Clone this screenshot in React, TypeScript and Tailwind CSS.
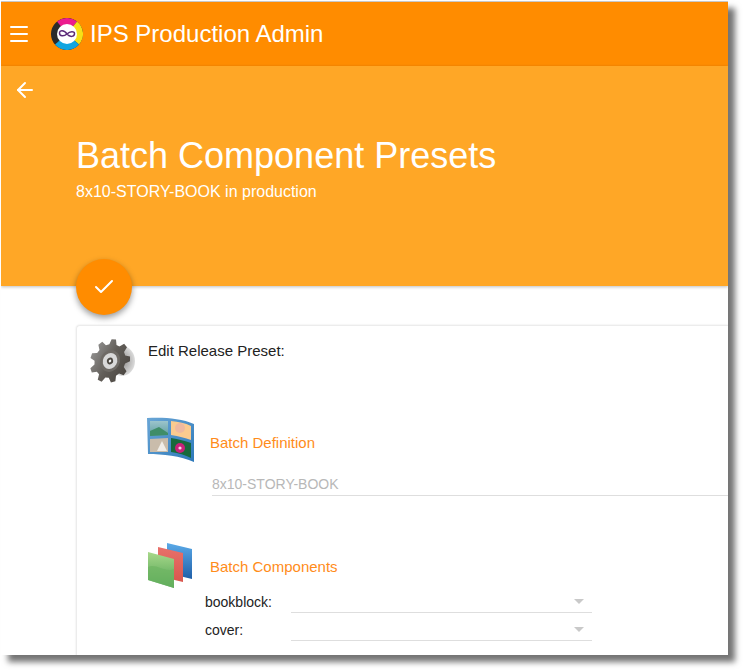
import { ArrowLeft, Check, Menu } from "lucide-react";

const font = { fontFamily: '"Liberation Sans", Arial, sans-serif' };

const LogoIcon = () => (
  <svg width="32" height="32" viewBox="0 0 32 32" className="shrink-0">
    <circle cx="16" cy="16" r="16" fill="#2b2b2b" />
    <path d="M6 3.5 A16 16 0 0 1 26 3.5 L16 16 Z" fill="#ec1c8e" />
    <path d="M26 3.5 A16 16 0 0 1 28 26.6 L16 16 Z" fill="#f7e017" />
    <path d="M28 26.6 A16 16 0 0 1 4 26.6 L16 16 Z" fill="#12a5e0" />
    <circle cx="16" cy="16" r="10" fill="#fff" />
    <path
      d="M16 16 C13 11.5 8.5 12 8.5 15 C8.5 18.5 13 18.5 16 16 C19 13 23.5 13 23.5 15.5 C23.5 19 19 19.5 16 16 Z"
      fill="none"
      stroke="#5b2a78"
      strokeWidth="1.5"
    />
  </svg>
);

// gear outline with square teeth
const gearPoints = () => {
  const pts: string[] = [];
  const teeth = 9;
  for (let i = 0; i < teeth; i++) {
    const a = (i / teeth) * Math.PI * 2;
    const step = (Math.PI * 2) / teeth;
    [
      [a, 17],
      [a + step * 0.18, 22],
      [a + step * 0.5, 22],
      [a + step * 0.68, 17],
    ].forEach(([t, r]) => {
      pts.push(`${(r * Math.cos(t)).toFixed(1)},${(r * Math.sin(t)).toFixed(1)}`);
    });
  }
  return pts.join(" ");
};

const GearIcon = () => (
  <svg width="48" height="46" viewBox="0 0 48 46" className="shrink-0">
    <defs>
      <linearGradient id="gear" x1="0" y1="0" x2="1" y2="1">
        <stop offset="0" stopColor="#a0a0a0" />
        <stop offset="0.5" stopColor="#625e59" />
        <stop offset="1" stopColor="#45403a" />
      </linearGradient>
      <radialGradient id="haze">
        <stop offset="0" stopColor="#8a8886" />
        <stop offset="1" stopColor="#dcdcdc" />
      </radialGradient>
    </defs>
    <ellipse cx="33" cy="22" rx="13" ry="15" fill="url(#haze)" />
    <g transform="translate(21 22) rotate(-20) skewX(-8) scale(0.95 0.95)">
      <polygon points={gearPoints()} fill="url(#gear)" />
      <circle r="11" fill="#6f6b66" />
      <circle r="8" fill="#d9d9d9" />
      <circle r="3.4" fill="#4d4943" />
      <circle r="1.4" fill="#f4f4f4" />
    </g>
  </svg>
);

const PhotosIcon = () => (
  <svg width="48" height="46" viewBox="0 0 48 46" className="shrink-0">
    <defs>
      <linearGradient id="frame" x1="0" y1="0" x2="1" y2="1">
        <stop offset="0" stopColor="#6aa6d6" />
        <stop offset="1" stopColor="#2d79ba" />
      </linearGradient>
      <linearGradient id="sky" x1="0" y1="0" x2="0" y2="1">
        <stop offset="0" stopColor="#9cc4cc" />
        <stop offset="1" stopColor="#5f9ea0" />
      </linearGradient>
    </defs>
    <path d="M0 1 C15 0 34 1 47 7 L47 45 C34 39 15 37 1 37 Z" fill="url(#frame)" />
    <path d="M3 4 L21 4 L21 18 L3 19 Z" fill="url(#sky)" />
    <path d="M3 14 L12 10 L21 16 L21 18 L3 19 Z" fill="#3f8d68" />
    <path d="M24 4 C32 5 38 6 44 9 L44 23 C38 21 32 19 24 18 Z" fill="#fbcb8f" />
    <circle cx="33" cy="11" r="5" fill="#efb9a0" />
    <path d="M3 22 L21 21 L21 35 L3 35 Z" fill="#c9bcab" />
    <path d="M10 34 L15 24 L20 34 Z" fill="#f0ede8" />
    <path d="M24 21 C32 22 38 24 44 26 L44 41 C38 38 32 36 24 35 Z" fill="#17693c" />
    <circle cx="33" cy="31" r="5" fill="#c7227a" />
    <circle cx="33" cy="31" r="1.6" fill="#f7d8e8" />
  </svg>
);

const LayersIcon = () => (
  <svg width="48" height="46" viewBox="0 0 48 46" className="shrink-0">
    <defs>
      <linearGradient id="blue" x1="0" y1="0" x2="0" y2="1">
        <stop offset="0" stopColor="#5aaae8" />
        <stop offset="1" stopColor="#1f5fa8" />
      </linearGradient>
      <linearGradient id="red" x1="0" y1="0" x2="0" y2="1">
        <stop offset="0" stopColor="#e8706a" />
        <stop offset="1" stopColor="#d9574e" />
      </linearGradient>
      <linearGradient id="green" x1="0" y1="0" x2="0" y2="1">
        <stop offset="0" stopColor="#a8d88a" />
        <stop offset="1" stopColor="#4a9f50" />
      </linearGradient>
    </defs>
    <path d="M20 0 L45 6 L45 36 L20 30 Z" fill="url(#blue)" />
    <path d="M11 4 L36 10 L36 39 L11 33 Z" fill="url(#red)" />
    <path d="M1 9 L27 16 L27 45 L1 37 Z" fill="url(#green)" />
    <path d="M1 24 C9 20 18 30 27 26 L27 45 L1 37 Z" fill="#6db562" opacity="0.7" />
  </svg>
);

const SelectRow = ({ label }: { label: string }) => (
  <div className="flex h-7 items-start">
    <span className="w-[86px] pt-[3px] text-sm leading-[18px] text-[#222]">{label}</span>
    <div className="relative h-[23px] w-[301px] border-b border-[#dedede]">
      <span className="absolute right-2 top-[9px] h-0 w-0 border-x-[5px] border-t-[5px] border-x-transparent border-t-[#c9c9c9]" />
    </div>
  </div>
);

export default function App() {
  return (
    <div className="h-[670px] w-[743px] bg-white pl-px pt-px" style={font}>
      <div className="flex h-[654px] w-[727px] flex-col overflow-hidden border-t border-[#c8c8c8] bg-white shadow-[7px_7px_6px_rgba(0,0,0,0.55)]">
        {/* Toolbar */}
        <header className="flex h-16 shrink-0 items-center bg-[#ff8c00] pb-px text-white">
          <Menu size={24} strokeWidth={2} className="ml-[6px]" />
          <div className="ml-[20px] flex">
            <LogoIcon />
          </div>
          <span className="ml-[7px] text-2xl">IPS Production Admin</span>
        </header>

        {/* Page header */}
        <section className="h-[220px] shrink-0 bg-[#ffa726] text-white shadow-[0_1px_3px_rgba(0,0,0,0.25)]">
          <div className="pl-3 pt-3">
            <ArrowLeft size={24} strokeWidth={2} />
          </div>
          <div className="pl-[75px] pt-[32px]">
            <h1 className="text-4xl leading-[44px]">Batch Component Presets</h1>
            <p className="mt-1 text-base leading-5">8x10-STORY-BOOK in production</p>
          </div>
        </section>

        {/* Content */}
        <main className="relative flex-1 pl-[75px] pt-[39px]">
          <button className="absolute left-[75px] top-[-27px] flex h-14 w-14 items-center justify-center rounded-full bg-[#ff8c00] text-white shadow-[0_3px_6px_rgba(0,0,0,0.4)]">
            <Check size={24} strokeWidth={2} />
          </button>

          <div className="h-[400px] rounded-tl-sm border-l border-t border-[#ececec] pl-3 pt-[13px] shadow-[0_0_2px_rgba(0,0,0,0.12)]">
            <div className="flex">
              <GearIcon />
              <span className="ml-[11px] mt-px text-[15px] leading-[22px] text-[#222]">Edit Release Preset:</span>
            </div>

            <div className="ml-[58px] mt-[-11px]">
              <div className="flex items-center pt-[43px]">
                <PhotosIcon />
                <span className="ml-[15px] mt-[6px] text-[15px] leading-5 text-[#ff8c1a]">Batch Definition</span>
              </div>
              <div className="ml-[65px] mt-[11px] h-[22px] border-b border-[#dedede] text-sm leading-5 text-[#b8b8b8]">
                8x10-STORY-BOOK
              </div>

              <div className="flex items-center pt-[47px]">
                <LayersIcon />
                <span className="ml-[15px] mt-[2px] text-[15px] leading-5 text-[#ff8c1a]">Batch Components</span>
              </div>
              <div className="ml-[58px] mt-px">
                <SelectRow label="bookblock:" />
                <SelectRow label="cover:" />
              </div>
            </div>
          </div>
        </main>
      </div>
    </div>
  );
}
